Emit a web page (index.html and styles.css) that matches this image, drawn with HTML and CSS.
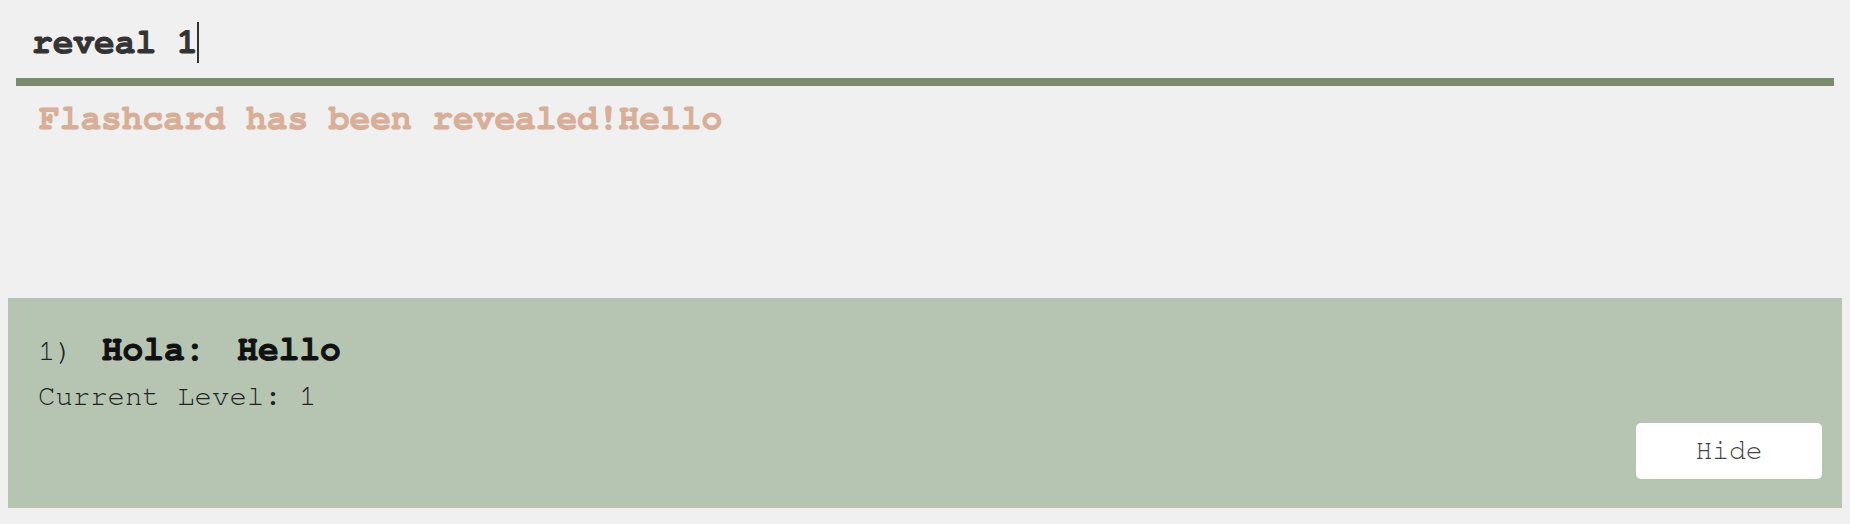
FILE: index.html
```html
<!DOCTYPE html>
<html>
<head>
<meta charset="utf-8">
<link rel="stylesheet" href="styles.css">
</head>
<body>
<div class="app">
  <div class="command">
    <span class="command-text">reveal 1</span><span class="caret"></span>
  </div>
  <div class="rule"></div>
  <div class="result">Flashcard has been revealed!Hello</div>
  <div class="card">
    <div class="card-title">
      <span class="card-index">1)</span>
      <span class="card-q">Hola:</span>
      <span class="card-a">Hello</span>
    </div>
    <div class="card-level">Current Level: 1</div>
    <div class="card-actions">
      <button class="hide-btn">Hide</button>
    </div>
  </div>
</div>
</body>
</html>
```
FILE: styles.css
```css
* { box-sizing: border-box; }
html, body { margin: 0; padding: 0; }
body {
  background: #f0f0f0;
  font-family: "FreeMono", "Courier New", "Liberation Mono", monospace;
  width: 1850px;
  height: 524px;
  overflow: hidden;
}
.command {
  height: 78px;
  padding: 22px 0 0 32px;
  display: flex;
  align-items: flex-start;
}
.command-text {
  font-size: 34.5px;
  font-weight: bold;
  -webkit-text-stroke: 0.9px #333;
  color: #333;
  line-height: 41px;
  white-space: pre;
}
.caret {
  width: 2px;
  height: 41px;
  background: #333;
  margin-left: -1px;
}
.rule {
  margin: 0 16px;
  height: 8px;
  background: #7b8b6e;
}
.result {
  height: 212px;
  padding: 16px 0 0 39px;
  font-size: 34.5px;
  font-weight: bold;
  color: #d8ae96;
  -webkit-text-stroke: 0.9px #d8ae96;
  line-height: 34px;
}
.card {
  margin: 0 8px;
  height: 210px;
  background: #b5c5b2;
  padding: 35px 20px 0 30px;
  display: flex;
  flex-direction: column;
}
.card-title {
  display: flex;
  align-items: baseline;
  line-height: 34px;
  color: #111;
}
.card-index {
  font-size: 29px;
  color: #222;
}
.card-q, .card-a {
  font-size: 34.5px;
  font-weight: bold;
  -webkit-text-stroke: 1px #111;
}
.card-q { margin-left: 29px; }
.card-a { margin-left: 32px; }
.card-level {
  margin-top: 11px;
  font-size: 29px;
  line-height: 34px;
  color: #222;
}
.card-actions {
  display: flex;
  justify-content: flex-end;
  margin-top: 9px;
}
.hide-btn {
  width: 186px;
  height: 56px;
  border: none;
  border-radius: 5px;
  background: #fff;
  font-family: inherit;
  font-size: 28px;
  color: #444;
  padding: 0;
}
```
